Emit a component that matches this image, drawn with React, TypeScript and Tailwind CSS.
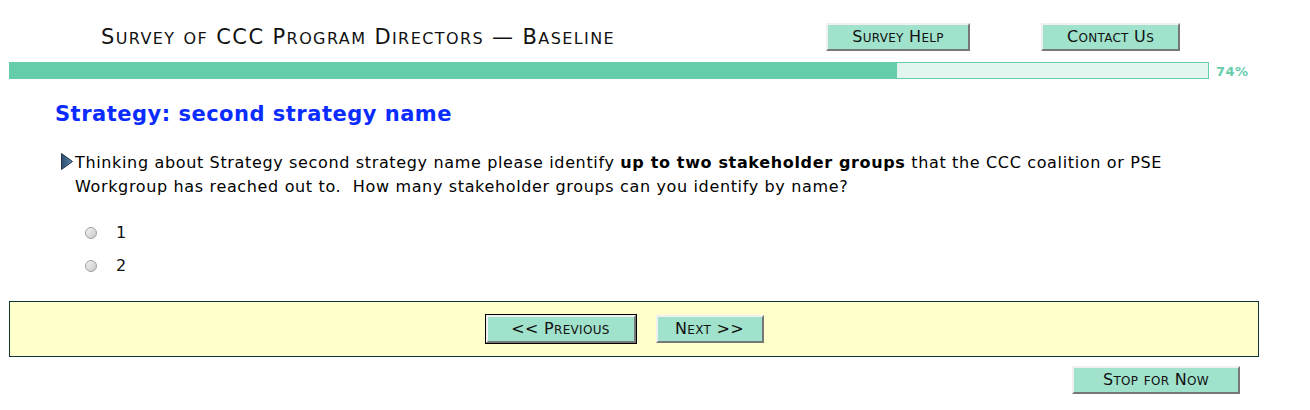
import React from "react";

const font = { fontFamily: '"DejaVu Sans", Verdana, sans-serif' };

// fake small caps: capitals full size, lowercase letters upper-cased at a smaller size
const SmallCaps: React.FC<{ text: string; small: string }> = ({ text, small }) => {
  const parts: React.ReactNode[] = [];
  let buf = "";
  let bufLower = false;
  const flush = (k: number) => {
    if (!buf) return;
    parts.push(
      bufLower ? (
        <span key={k} className={small}>
          {buf.toUpperCase()}
        </span>
      ) : (
        <span key={k}>{buf}</span>
      )
    );
    buf = "";
  };
  text.split("").forEach((ch, i) => {
    const lower = ch !== ch.toUpperCase();
    if (buf && lower !== bufLower) flush(i);
    bufLower = lower;
    buf += ch;
  });
  flush(text.length);
  return <>{parts}</>;
};

const NavButton: React.FC<{ label: string; className?: string; focused?: boolean }> = ({
  label,
  className = "",
  focused = false,
}) => {
  return (
    <button
      className={
        "h-[28px] bg-[#a0e2cc] text-[#111] text-[16px] tracking-[0.3px] leading-none border-2 border-t-[#f0f0f0] border-l-[#f0f0f0] border-b-[#777] border-r-[#777] " +
        (focused ? "outline outline-1 outline-black " : "") +
        className
      }
    >
      <SmallCaps text={label} small="text-[12px]" />
    </button>
  );
};

export default function App() {
  return (
    <div style={font} className="w-[1310px] h-[410px] bg-white text-black overflow-hidden">
      {/* header */}
      <div className="flex items-start h-[56px] pt-[23px]">
        <h1 className="ml-[101px] w-[725px] text-[21px] tracking-[1.4px] leading-[28px] text-[#111]">
          <SmallCaps text="Survey of CCC Program Directors — Baseline" small="text-[16px]" />
        </h1>
        <NavButton label="Survey Help" className="w-[144px]" />
        <NavButton label="Contact Us" className="w-[139px] ml-[71px]" />
      </div>

      {/* progress */}
      <div className="flex items-center mt-[6px] ml-[9px]">
        <div className="w-[1200px] h-[17px] bg-[#e2f6ef] border border-[#66cdaa] flex">
          <div className="w-[74%] h-full bg-[#66cdaa]" />
        </div>
        <span className="ml-[7px] text-[13px] tracking-[0.4px] font-bold text-[#66cdaa] leading-none mt-[2px]">74%</span>
      </div>

      {/* heading */}
      <h2 className="ml-[55px] mt-[22px] text-[21px] tracking-[0.5px] font-bold text-[#0a2cff] leading-[26px]">
        Strategy: second strategy name
      </h2>

      {/* question */}
      <div className="flex mt-[24px] ml-[61px]">
        <svg width="12" height="17" viewBox="0 0 12 17" className="mt-[2px] shrink-0">
          <defs>
            <linearGradient id="tri" x1="0" y1="0" x2="1" y2="0">
              <stop offset="0" stopColor="#2d4c6e" />
              <stop offset="1" stopColor="#5b86b0" />
            </linearGradient>
          </defs>
          <polygon points="0.5,0.5 11.5,8.5 0.5,16.5" fill="url(#tri)" stroke="#23364c" strokeWidth="1" />
        </svg>
        <p className="ml-[2px] w-[1150px] text-[16px] tracking-[0.65px] leading-[24px]">
          Thinking about Strategy second strategy name please identify{" "}
          <b>up to two stakeholder groups</b> that the CCC coalition or PSE
          <br />
          Workgroup has reached out to.&nbsp; How many stakeholder groups can you identify by name?
        </p>
      </div>

      {/* options */}
      <div className="ml-[85px] mt-[22px] flex flex-col gap-[9px] text-[16px] text-[#111]">
        {["1", "2"].map((v) => (
          <label key={v} className="flex items-center h-[24px]">
            <span className="w-[12px] h-[12px] rounded-full border border-[#a0a0a0] bg-gradient-to-br from-[#f4f4f4] to-[#c8c8c8]" />
            <span className="ml-[19px]">{v}</span>
          </label>
        ))}
      </div>

      {/* nav box */}
      <div className="mx-[9px] w-[1250px] mt-[23px] h-[56px] bg-[#ffffcc] border border-[#0e3535] flex items-center justify-center gap-[20px] pr-[19px]">
        <NavButton label="<< Previous" className="w-[150px]" focused />
        <NavButton label="Next >>" className="w-[108px]" />
      </div>

      {/* stop */}
      <div className="flex justify-end mr-[70px] mt-[9px]">
        <NavButton label="Stop for Now" className="w-[168px] h-[27px]" />
      </div>
    </div>
  );
}
